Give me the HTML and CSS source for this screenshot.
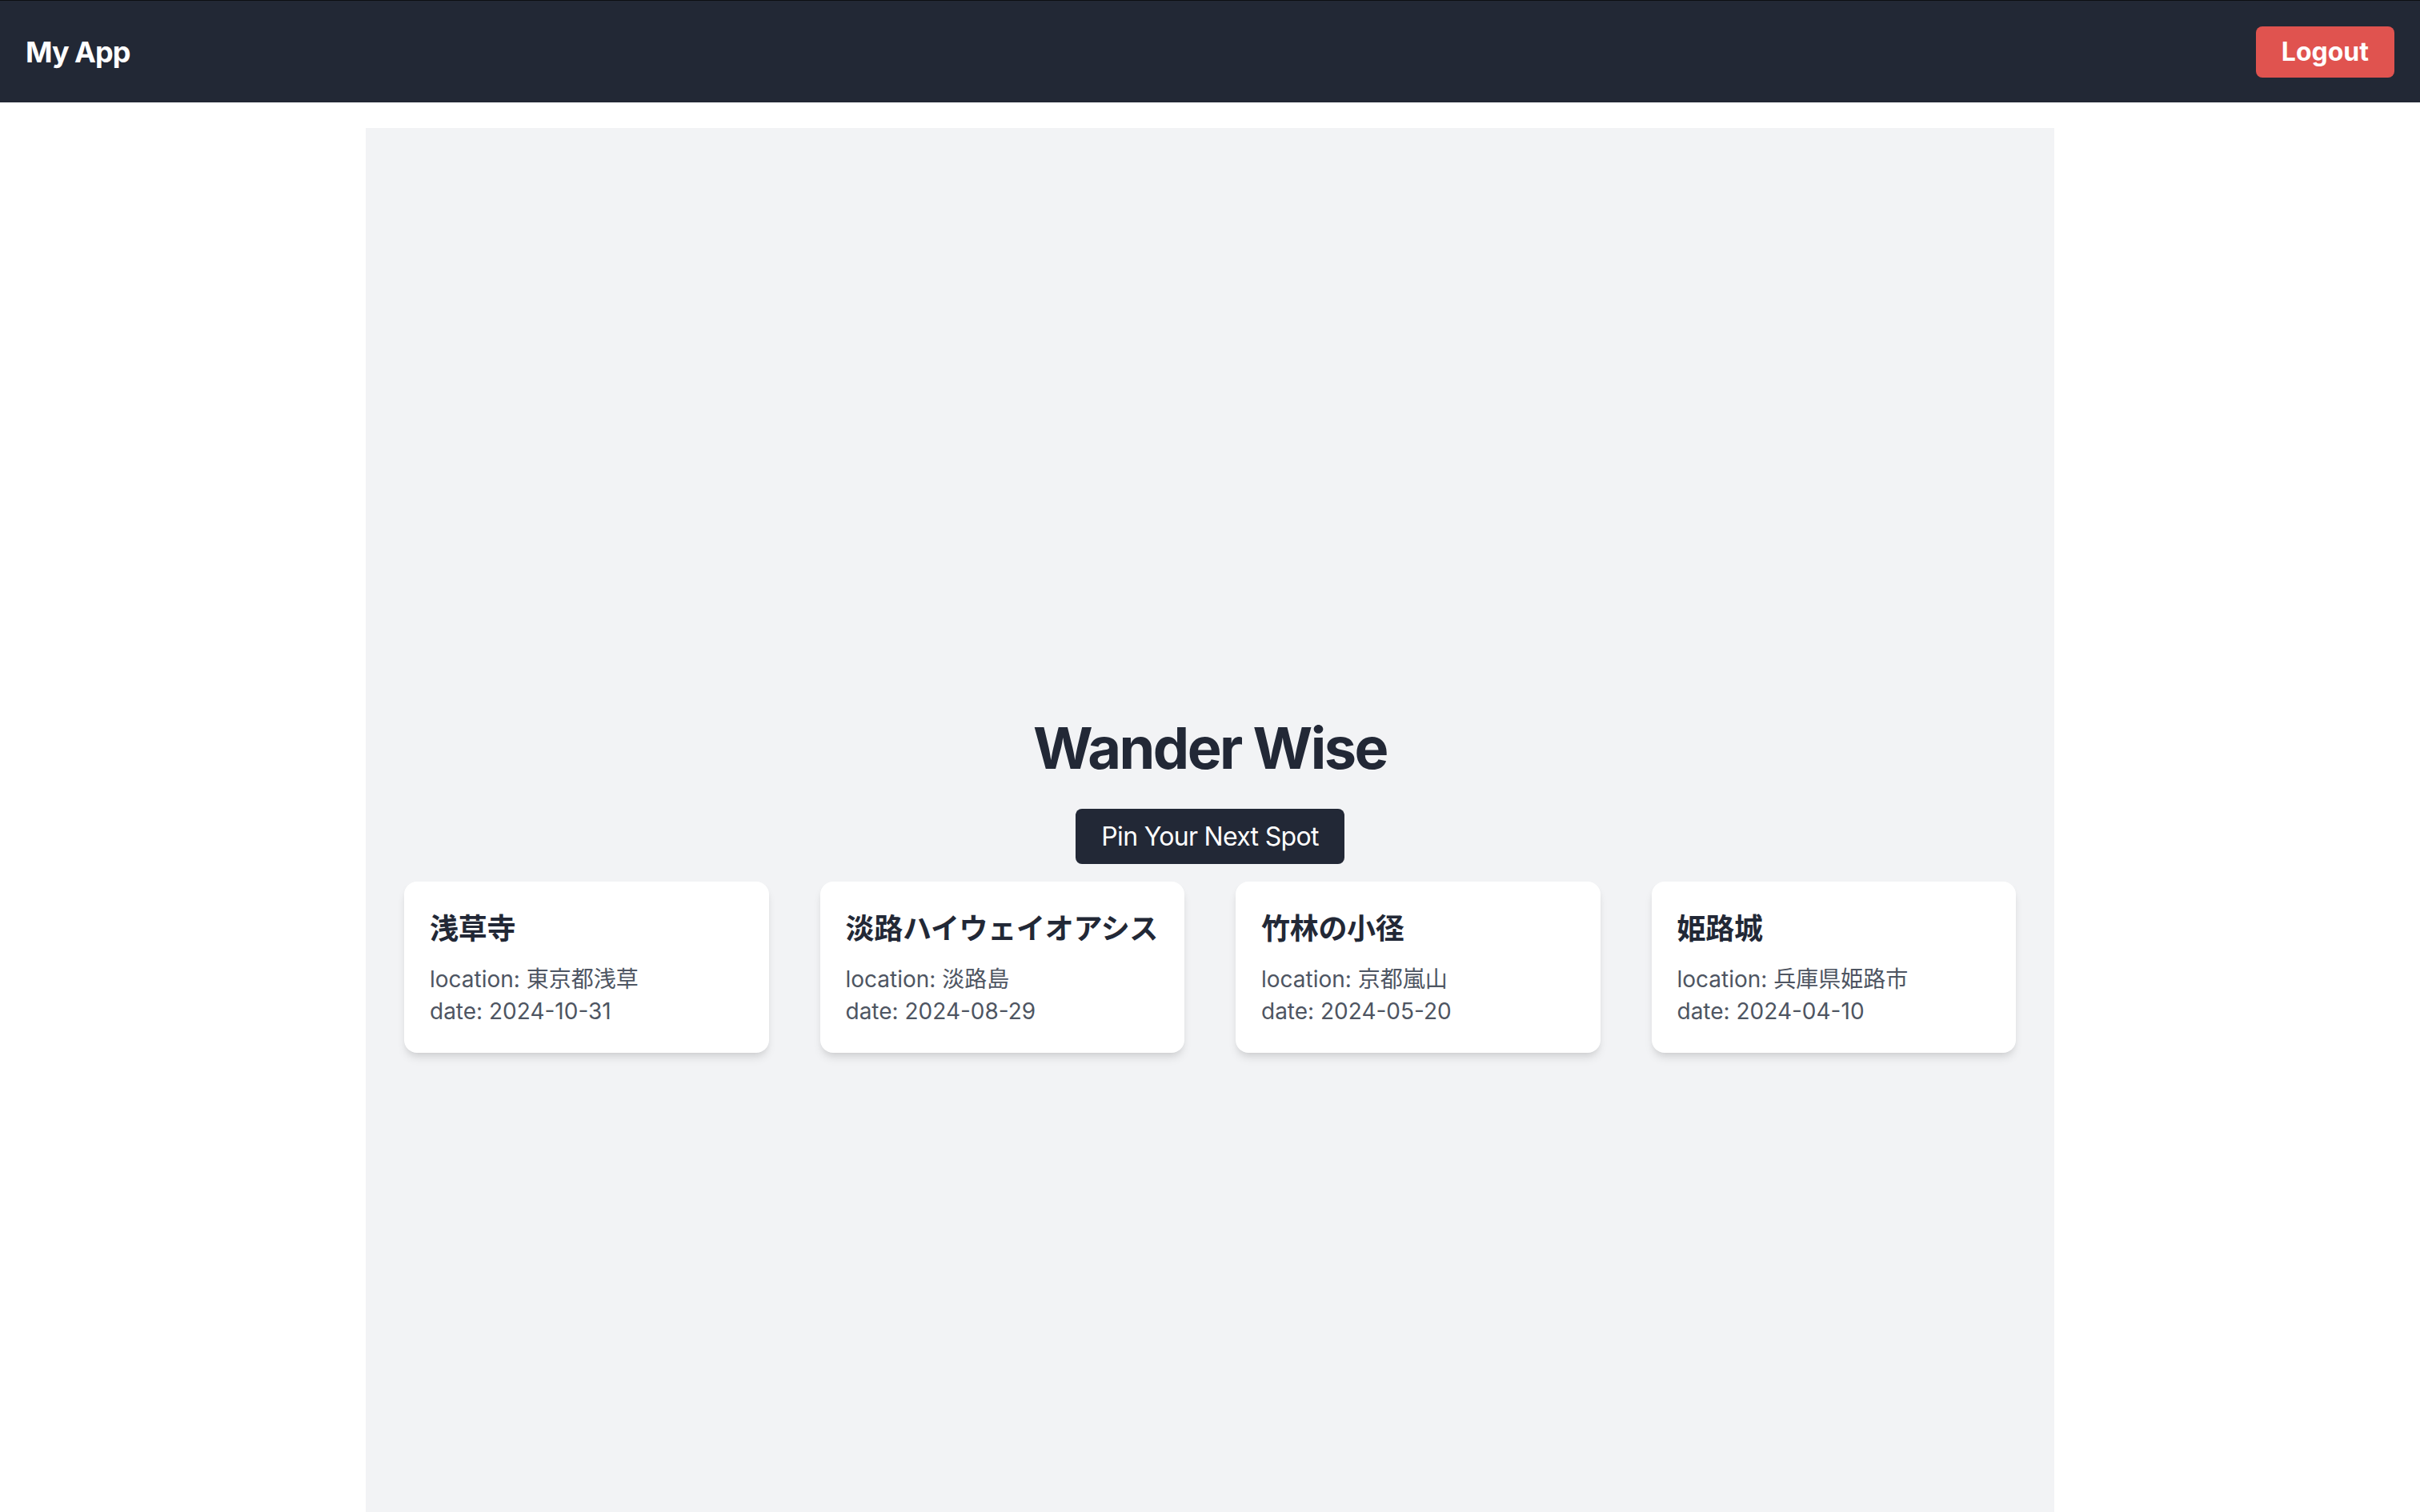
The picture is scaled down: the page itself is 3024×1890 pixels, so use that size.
FILE: index.html
```html
<!DOCTYPE html>
<html lang="ja">
<head>
<meta charset="utf-8">
<title>Wander Wise</title>
<link rel="stylesheet" href="styles.css">
</head>
<body>
<header class="topbar">
  <div class="brand">My App</div>
  <button class="logout">Logout</button>
</header>
<main class="panel">
  <h1 class="title">Wander Wise</h1>
  <button class="pin">Pin Your Next Spot</button>
  <section class="cards">
    <article class="card">
      <h2 class="card-title">浅草寺</h2>
      <p class="card-line">location: 東京都浅草</p>
      <p class="card-line">date: 2024-10-31</p>
    </article>
    <article class="card">
      <h2 class="card-title">淡路ハイウェイオアシス</h2>
      <p class="card-line">location: 淡路島</p>
      <p class="card-line">date: 2024-08-29</p>
    </article>
    <article class="card">
      <h2 class="card-title">竹林の小径</h2>
      <p class="card-line">location: 京都嵐山</p>
      <p class="card-line">date: 2024-05-20</p>
    </article>
    <article class="card">
      <h2 class="card-title">姫路城</h2>
      <p class="card-line">location: 兵庫県姫路市</p>
      <p class="card-line">date: 2024-04-10</p>
    </article>
  </section>
</main>
</body>
</html>
```

FILE: styles.css
```css
* {
  box-sizing: border-box;
}

html, body {
  margin: 0;
  padding: 0;
  background: #ffffff;
  font-family: Inter, "Noto Sans CJK JP", sans-serif;
}

.topbar {
  height: 128px;
  background: #222835;
  border-top: 1px solid #0d0f13;
  display: flex;
  align-items: center;
  justify-content: space-between;
  padding: 0 32px;
}

.brand {
  color: #ffffff;
  font-size: 36px;
  font-weight: 700;
  line-height: 56px;
  letter-spacing: -1px;
}

.logout {
  background: #e0534f;
  color: #ffffff;
  border: none;
  border-radius: 8px;
  font-family: inherit;
  font-size: 32px;
  font-weight: 700;
  line-height: 48px;
  padding: 8px 32px;
  margin: 0;
  cursor: pointer;
}

.panel {
  width: 2110px;
  margin: 32px auto 0;
  min-height: 1890px;
  background: #f2f3f5;
  display: flex;
  flex-direction: column;
  align-items: center;
  justify-content: center;
  padding: 0 48px;
}

.title {
  margin: 0 0 36px;
  font-size: 72px;
  line-height: 80px;
  font-weight: 700;
  letter-spacing: -2.5px;
  color: #222836;
}

.pin {
  background: #222836;
  color: #ffffff;
  border: none;
  border-radius: 8px;
  font-family: inherit;
  font-size: 32px;
  font-weight: 400;
  line-height: 49px;
  letter-spacing: -0.7px;
  padding: 10px 32px;
  margin: 0 0 22px;
  cursor: pointer;
}

.cards {
  width: 100%;
  display: grid;
  grid-template-columns: repeat(4, 1fr);
  gap: 64px;
}

.card {
  background: #ffffff;
  border-radius: 16px;
  padding: 32px;
  box-shadow: 0 8px 12px -2px rgba(0, 0, 0, 0.1), 0 4px 8px -4px rgba(0, 0, 0, 0.1);
}

.card-title {
  margin: 0 0 16px;
  font-size: 36px;
  line-height: 54px;
  font-weight: 700;
  letter-spacing: -0.3px;
  white-space: nowrap;
  color: #222836;
}

.card-line {
  margin: 0;
  font-size: 28px;
  line-height: 40px;
  color: #4e5562;
}
```
